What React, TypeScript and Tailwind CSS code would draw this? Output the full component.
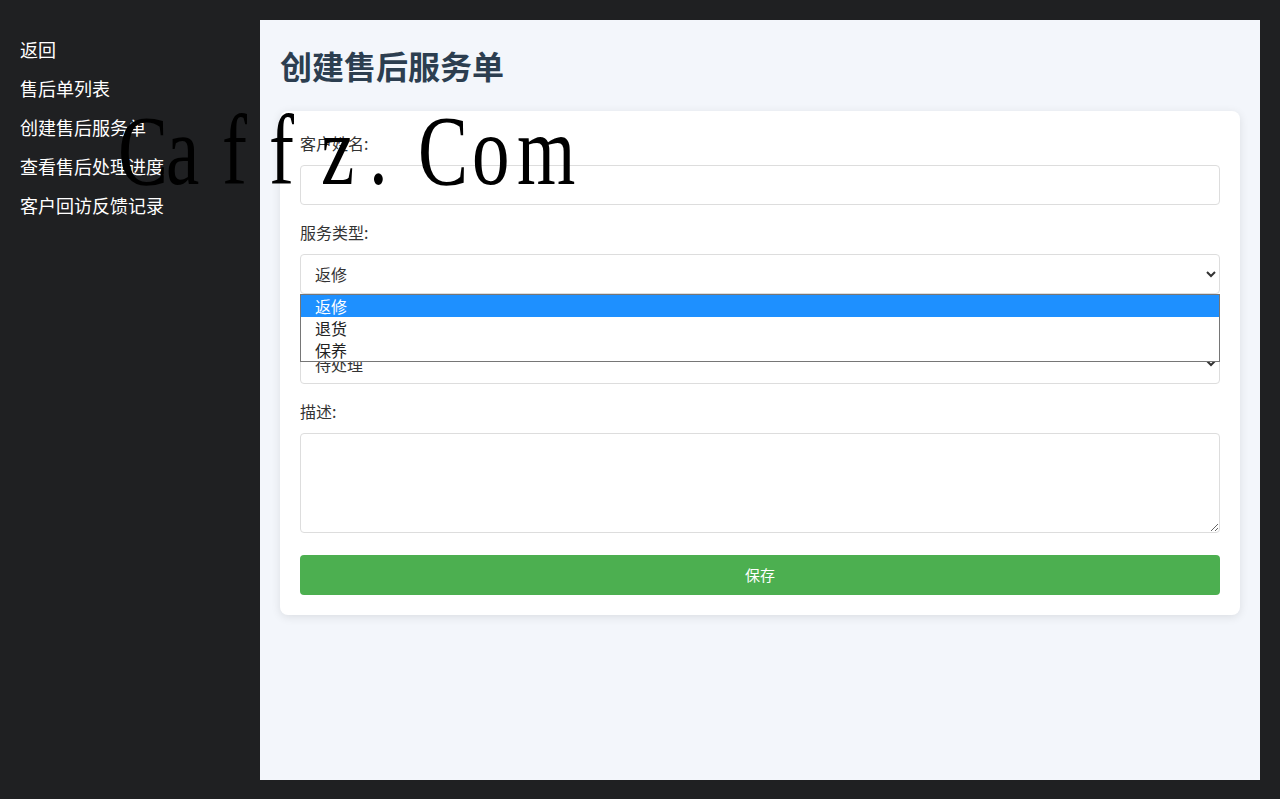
import React from "react";

const links = ["返回", "售后单列表", "创建售后服务单", "查看售后处理进度", "客户回访反馈记录"];

const wm: { c: string; x: number }[] = [
  { c: "C", x: 118 },
  { c: "a", x: 166 },
  { c: "f", x: 222 },
  { c: "f", x: 269 },
  { c: "z", x: 321 },
  { c: ".", x: 369 },
  { c: "C", x: 418 },
  { c: "o", x: 472 },
  { c: "m", x: 517 },
];

export default function App() {
  return (
    <div className="relative flex h-screen w-full bg-[#1f2022] font-['Noto_Sans_CJK_SC',sans-serif] overflow-hidden">
      <aside className="w-[260px] shrink-0 px-[20px] pt-[29px]">
        {links.map((l) => (
          <div key={l} className="flex h-[39px] items-center text-[18px] leading-[24px] text-white">
            {l}
          </div>
        ))}
      </aside>

      <main className="mb-[19px] mt-[20px] mr-[20px] flex-1 bg-[#f3f6fb] px-[20px] pt-[26px]">
        <h1 className="h-[38px] text-[32px] font-bold leading-[38px] text-[#2c3e50]">创建售后服务单</h1>

        <div className="mt-[27px] rounded-[8px] bg-white p-[20px] shadow-[0_2px_10px_rgba(0,0,0,0.1)]">
          <div className="mb-[15px]">
            <label className="mb-[10px] block h-[24px] text-[16px] leading-[24px] text-[#333]">客户姓名:</label>
            <input type="text" className="block h-[40px] w-full rounded-[4px] border border-[#ddd] bg-white px-[10px] text-[16px] text-[#333] outline-none" />
          </div>

          <div className="relative mb-[15px]">
            <label className="mb-[10px] block h-[24px] text-[16px] leading-[24px] text-[#333]">服务类型:</label>
            <div className="relative">
              <select defaultValue="返修" className="block h-[40px] w-full rounded-[4px] border border-[#ddd] bg-white px-[10px] text-[16px] text-[#333] outline-none">
                <option>返修</option>
                <option>退货</option>
                <option>保养</option>
              </select>
              <div className="absolute left-0 right-0 top-full z-10 border border-[#767676] bg-white text-[16px] leading-[22px] text-[#222]">
                <div className="h-[22px] bg-[#1e90ff] pl-[14px] text-white">返修</div>
                <div className="h-[22px] pl-[14px]">退货</div>
                <div className="h-[22px] pl-[14px]">保养</div>
              </div>
            </div>
          </div>

          <div className="mb-[15px]">
            <label className="mb-[10px] block h-[24px] text-[16px] leading-[24px] text-[#333]">处理状态:</label>
            <select defaultValue="待处理" className="block h-[41px] w-full rounded-[4px] border border-[#ddd] bg-white px-[10px] text-[16px] text-[#333] outline-none">
              <option>待处理</option>
              <option>处理中</option>
              <option>已完成</option>
            </select>
          </div>

          <div className="mb-[22px]">
            <label className="mb-[10px] block h-[24px] text-[16px] leading-[24px] text-[#333]">描述:</label>
            <textarea className="block h-[100px] w-full rounded-[4px] border border-[#ddd] bg-white p-[10px] text-[16px] text-[#333] outline-none" />
          </div>

          <button className="block h-[40px] w-full rounded-[4px] bg-[#4caf50] text-[15px] leading-[40px] text-white">保存</button>
        </div>
      </main>

      <div className="pointer-events-none absolute left-0 top-[101px] z-50 h-[100px] w-[600px] font-['Liberation_Serif',serif] text-[100px] leading-[100px] text-black">
        {wm.map((g, i) => (
          <span
            key={i}
            className="absolute top-0 origin-left scale-x-[0.75]"
            style={{ left: g.x }}
          >
            {g.c}
          </span>
        ))}
      </div>
    </div>
  );
}
